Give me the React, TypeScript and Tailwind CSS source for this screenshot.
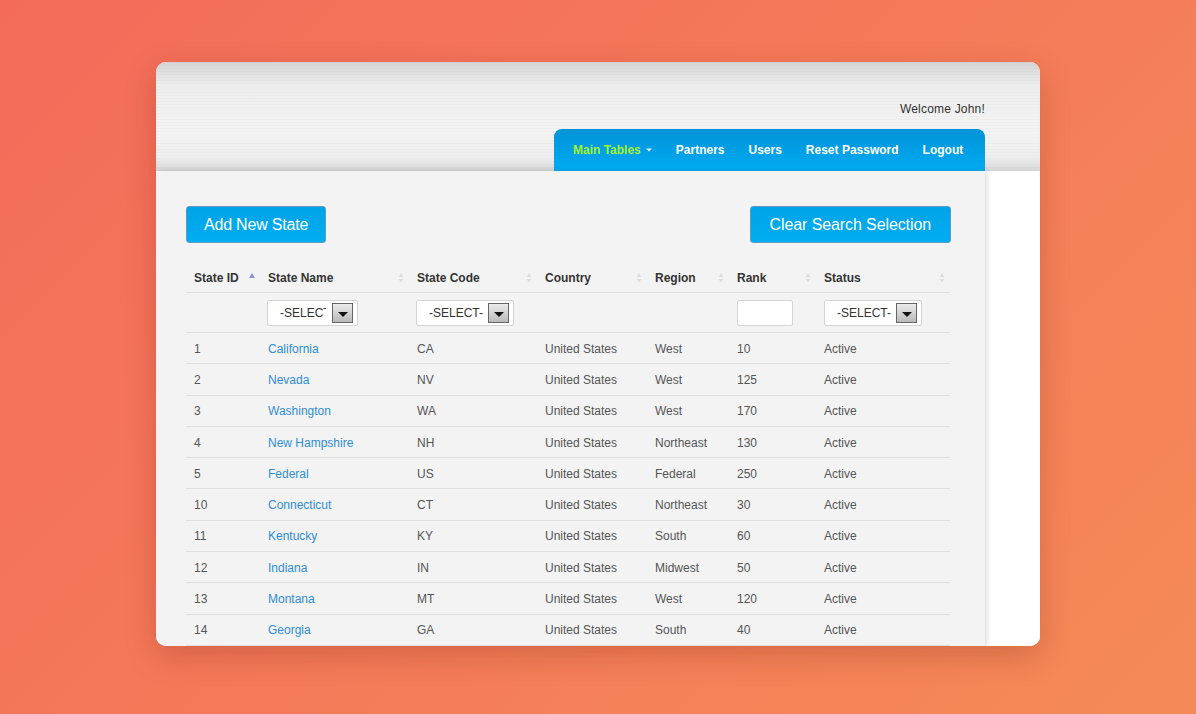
import React from "react"

const COLS = "grid grid-cols-[74px_149px_128px_110px_82px_87px_134px]"

const ROWS = [
  { id: "1", name: "California", code: "CA", region: "West", rank: "10" },
  { id: "2", name: "Nevada", code: "NV", region: "West", rank: "125" },
  { id: "3", name: "Washington", code: "WA", region: "West", rank: "170" },
  { id: "4", name: "New Hampshire", code: "NH", region: "Northeast", rank: "130" },
  { id: "5", name: "Federal", code: "US", region: "Federal", rank: "250" },
  { id: "10", name: "Connecticut", code: "CT", region: "Northeast", rank: "30" },
  { id: "11", name: "Kentucky", code: "KY", region: "South", rank: "60" },
  { id: "12", name: "Indiana", code: "IN", region: "Midwest", rank: "50" },
  { id: "13", name: "Montana", code: "MT", region: "West", rank: "120" },
  { id: "14", name: "Georgia", code: "GA", region: "South", rank: "40" },
]

const HEADERS: { label: string; sort: "asc" | "both" }[] = [
  { label: "State ID", sort: "asc" },
  { label: "State Name", sort: "both" },
  { label: "State Code", sort: "both" },
  { label: "Country", sort: "both" },
  { label: "Region", sort: "both" },
  { label: "Rank", sort: "both" },
  { label: "Status", sort: "both" },
]

function SortIcon({ sort }: { sort: "asc" | "both" }) {
  if (sort === "asc") {
    return (
      <svg width="8" height="10" viewBox="0 0 8 10" className="mb-[4px]">
        <path d="M1 7 L4 2 L7 7 Z" fill="#8b95d6" />
      </svg>
    )
  }
  return (
    <svg width="8" height="12" viewBox="0 0 8 12">
      <path d="M1.5 5 L4 1.5 L6.5 5 Z" fill="#dcdcdc" />
      <path d="M1.5 7 L4 10.5 L6.5 7 Z" fill="#dcdcdc" />
    </svg>
  )
}

function FakeSelect({ width, gap }: { width: string; gap: string }) {
  return (
    <div className={`${width} h-[26px] flex items-center bg-white border border-[#d4d4d4] rounded-[2px] pl-[12px] pr-[4px]`}>
      <div className={`flex-1 overflow-hidden whitespace-nowrap text-[12px] text-[#333] ${gap}`}>-SELECT-</div>
      <div className="w-[21px] h-[20px] flex items-end justify-center pb-[4px] border border-[#666] bg-[linear-gradient(to_bottom,#ececec,#b9b9b9)] shrink-0">
        <svg width="10" height="6" viewBox="0 0 10 6">
          <path d="M0 0 L10 0 L5 5 Z" fill="#111" />
        </svg>
      </div>
    </div>
  )
}

const NAV = ["Partners", "Users", "Reset Password", "Logout"]

export default function App() {
  return (
    <div
      className="w-[1196px] h-[714px] overflow-hidden flex justify-center pt-[62px] bg-[linear-gradient(135deg,#f46b5a,#f58a58)]"
      style={{ fontFamily: '"Liberation Sans", Arial, sans-serif' }}
    >
      <div className="w-[884px] h-[584px] rounded-[10px] overflow-hidden bg-white shadow-[0_10px_30px_rgba(120,30,10,0.25)] flex flex-col">
        {/* Header */}
        <div className="h-[109px] shrink-0 flex flex-col items-end pr-[55px] bg-[repeating-linear-gradient(0deg,rgba(0,0,0,0.018)_0px,rgba(0,0,0,0.018)_1px,transparent_1px,transparent_3px),linear-gradient(to_bottom,#d5d5d5,#eeeeee_22%,#f4f4f4_65%,#eeeeee_88%,#d6d6d6)]">
          <div className="mt-[40px] h-[14px] leading-[14px] text-[12px] text-[#333] tracking-[0.2px]">Welcome John!</div>
          <div className="mt-[13px] h-[42px] w-[431px] rounded-t-[8px] bg-[linear-gradient(to_bottom,#0093d8,#00abf2)] flex items-center pl-[7px] text-[12px] font-bold text-white whitespace-nowrap">
            <div className="px-[12px] flex items-center gap-[5px] text-[#a6f22a] shrink-0">
              Main Tables
              <svg width="6" height="4" viewBox="0 0 6 4">
                <path d="M0 0.5 L6 0.5 L3 3.5 Z" fill="#e6f4ff" />
              </svg>
            </div>
            {NAV.map((n) => (
              <div key={n} className="px-[12px] shrink-0">{n}</div>
            ))}
          </div>
        </div>

        {/* Body */}
        <div className="flex flex-1 min-h-0">
          <div className="w-[829px] shrink-0 bg-[#f3f3f3] shadow-[2px_0_5px_rgba(0,0,0,0.14)] pl-[30px] pr-[34px] pt-[35px] relative z-10">
            <div className="flex justify-between">
              <button className="h-[37px] px-[17px] rounded-[3px] border border-[#5d9cc2] bg-[linear-gradient(to_bottom,#00a3e8,#00adf0)] text-white text-[16px] tracking-[-0.2px]">
                Add New State
              </button>
              <button className="h-[37px] px-[19px] rounded-[3px] border border-[#5d9cc2] bg-[linear-gradient(to_bottom,#00a3e8,#00adf0)] text-white text-[16px] tracking-[-0.1px]">
                Clear Search Selection
              </button>
            </div>

            <div className="mt-[19px] text-[12px] w-[764px]">
              {/* Head */}
              <div className={`${COLS} h-[31px] pt-[1px] border-b border-[#dedede]`}>
                {HEADERS.map((h) => (
                  <div key={h.label} className="flex items-center justify-between pl-[8px] pr-[4px] font-bold text-[#333]">
                    <span>{h.label}</span>
                    <SortIcon sort={h.sort} />
                  </div>
                ))}
              </div>
              {/* Filters */}
              <div className={`${COLS} h-[40px] border-b border-[#dedede] items-center`}>
                <div />
                <div className="pl-[7px]"><FakeSelect width="w-[91px]" gap="mr-[6px]" /></div>
                <div className="pl-[7px]"><FakeSelect width="w-[98px]" gap="mr-[4px]" /></div>
                <div />
                <div />
                <div className="pl-[8px]">
                  <div className="w-[56px] h-[26px] bg-white border border-[#d4d4d4] rounded-[2px]" />
                </div>
                <div className="pl-[8px]"><FakeSelect width="w-[98px]" gap="mr-[4px]" /></div>
              </div>
              {/* Rows */}
              {ROWS.map((r) => (
                <div key={r.id} className={`${COLS} h-[31.3px] pt-[1px] border-b border-[#dedede] items-center text-[#555]`}>
                  <div className="pl-[8px]">{r.id}</div>
                  <div className="pl-[8px] text-[#2f8dd8]">{r.name}</div>
                  <div className="pl-[8px]">{r.code}</div>
                  <div className="pl-[8px]">United States</div>
                  <div className="pl-[8px]">{r.region}</div>
                  <div className="pl-[8px]">{r.rank}</div>
                  <div className="pl-[8px]">Active</div>
                </div>
              ))}
            </div>
          </div>
          <div className="flex-1 bg-white" />
        </div>
      </div>
    </div>
  )
}
